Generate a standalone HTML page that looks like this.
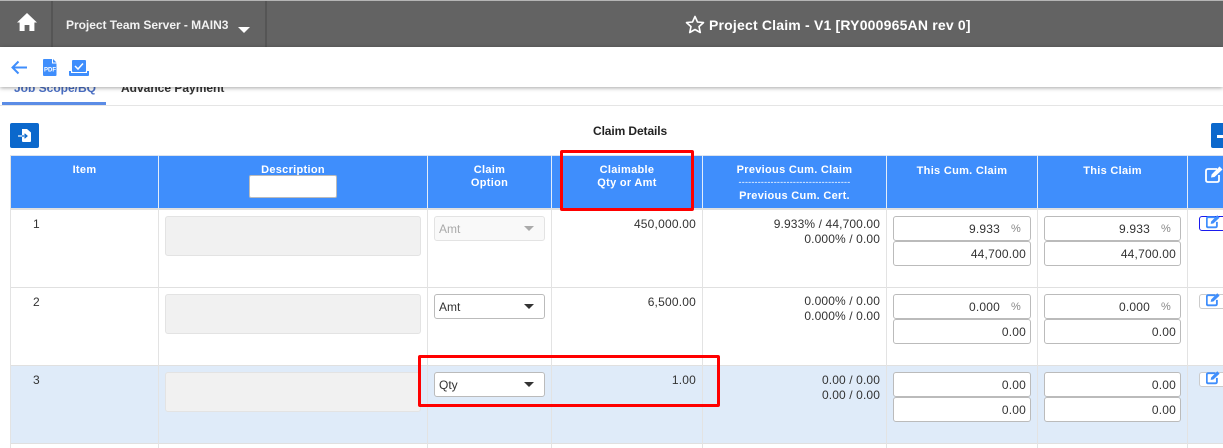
<!DOCTYPE html>
<html><head><meta charset="utf-8"><style>
html,body{margin:0;padding:0;background:#fff}
#p{position:relative;width:1223px;height:448px;overflow:hidden;background:#fff;font-family:"Liberation Sans",sans-serif;font-size:12px;color:#333}
#p div{position:absolute;box-sizing:border-box;white-space:nowrap}
#p svg{position:absolute}
.h{color:#fff;font-weight:bold;font-size:11px;text-align:center;letter-spacing:.3px;line-height:13px}
.vl{width:2px;background:#e3e3e3;top:155px;height:293px}
.vw{width:1px;background:#e3edfa;top:155px;height:53px}
.hl{left:10px;width:1213px;height:1px;background:#e0e0e0}
.d{background:#f1f1f1;border:1px solid #e3e3e3;border-radius:3px;left:165px;width:256px;height:40px}
.s{left:434px;width:111px;height:25px;background:#fff;border:1px solid #bbb;border-radius:3px;font-size:12px;line-height:25px;padding-left:4px}
.tr{position:absolute;left:89px;top:9px;width:0;height:0;border-left:5px solid transparent;border-right:5px solid transparent;border-top:5px solid #333}
.n{font-size:12px;text-align:right;line-height:16px;color:#333;letter-spacing:.2px}
.i{width:138px;height:25px;background:#fff;border:1px solid #bbb;border-radius:3px;text-align:right;font-size:12px;line-height:24px;padding-right:4px;letter-spacing:.2px}
.pc{padding-right:30px}
.pc span{position:absolute;right:9px;top:0;color:#888;font-size:11px}
.e{left:1199px;width:40px;height:15px;background:#fff;border:1px solid #ccc;border-radius:3px}
.e svg{left:6px;top:-3px}
</style></head><body><div id="p">

<div style="left:0;top:0;width:1223px;height:47px;background:#636363"></div>
<div style="left:0;top:0;width:1223px;height:1px;background:#b5b5b5"></div>
<div style="left:51px;top:1px;width:2px;height:46px;background:#555"></div>
<div style="left:265px;top:1px;width:2px;height:46px;background:#555"></div>
<svg style="left:16px;top:12px" width="22" height="20" viewBox="0 0 22 20"><path d="M11 1 L1 10.5 L3.6 10.5 L3.6 19 L8.6 19 L8.6 13 L13.4 13 L13.4 19 L18.4 19 L18.4 10.5 L21 10.5 Z" fill="#fff"/></svg>
<div style="left:66px;top:17px;color:#f2f2f2;font-size:12px;font-weight:bold;letter-spacing:-.03px;line-height:16px">Project Team Server - MAIN3</div>
<div style="left:238px;top:27px;width:0;height:0;border-left:6px solid transparent;border-right:6px solid transparent;border-top:6px solid #fff"></div>
<svg style="left:685px;top:15px" width="20" height="19" viewBox="0 0 20 19"><path d="M10 1.5 L12.5 7 L18.5 7.6 L14 11.6 L15.3 17.5 L10 14.5 L4.7 17.5 L6 11.6 L1.5 7.6 L7.5 7 Z" fill="none" stroke="#fff" stroke-width="1.6" stroke-linejoin="round"/></svg>
<div style="left:709px;top:17px;color:#fff;font-size:14px;font-weight:bold;line-height:17px;letter-spacing:.19px">Project Claim - V1 [RY000965AN rev 0]</div>

<div style="left:14px;top:80px;color:#4a6fc4;font-size:12px;font-weight:bold;line-height:16px">Job Scope/BQ</div>
<div style="left:121px;top:80px;color:#333;font-size:12px;font-weight:bold;line-height:16px">Advance Payment</div>
<div style="left:2px;top:102px;width:104px;height:3px;background:#5b8ce6"></div>
<div style="left:0;top:105px;width:1223px;height:1px;background:#e5e5e5"></div>

<div style="left:0;top:47px;width:1223px;height:40px;background:#fff;box-shadow:0 1px 4px rgba(0,0,0,.35)"></div>
<svg style="left:11px;top:60px" width="17" height="15" viewBox="0 0 17 15"><path d="M16 7.5 H2 M7.5 1.5 L1.5 7.5 L7.5 13.5" fill="none" stroke="#3f8efc" stroke-width="2"/></svg>
<svg style="left:43px;top:59px" width="14" height="17" viewBox="0 0 14 17"><path d="M1 0 H9 L9 4.5 L13.5 4.5 V16 Q13.5 17 12.5 17 H1 Q0 17 0 16 V1 Q0 0 1 0 Z M10 0 L13.5 3.5 H10 Z" fill="#3f8efc"/><text x="1" y="12.5" font-family="Liberation Sans" font-size="6" font-weight="bold" fill="#fff">PDF</text></svg>
<svg style="left:69px;top:60px" width="20" height="16" viewBox="0 0 20 16"><rect x="3" y="0" width="14" height="12" rx="1" fill="#3f8efc"/><path d="M0 11 H2 V13 H18 V11 H20 V15 Q20 16 19 16 H1 Q0 16 0 15 Z" fill="#3f8efc"/><path d="M6 6 L9 9 L14 3.5" fill="none" stroke="#fff" stroke-width="1.5"/></svg>

<div style="left:10px;top:123px;width:29px;height:25px;background:#0b68cc;border-radius:2px"></div>
<svg style="left:17px;top:127px" width="15" height="17" viewBox="0 0 15 17"><path d="M5 2 H10 L14 5.5 V14 Q14 15 13 15 H6 Q5 15 5 14 Z" fill="#fff"/><path d="M1 9 H10 M7.5 6.8 L10 9 L7.5 11.2" fill="none" stroke="#0b68cc" stroke-width="1.2"/><path d="M1 9 H5" stroke="#fff" stroke-width="1.2"/></svg>
<div style="left:593px;top:124px;font-size:12px;font-weight:bold;color:#222;line-height:14px;letter-spacing:-.1px">Claim Details</div>
<div style="left:1211px;top:123px;width:14px;height:25px;background:#0b68cc;border-radius:2px 0 0 2px"></div>
<svg style="left:1217px;top:131px" width="6" height="10" viewBox="0 0 6 10"><path d="M0 4 H6 V7 H0 Z" fill="#fff"/></svg>

<div style="left:10px;top:155px;width:1213px;height:1px;background:#dbe3ee"></div>
<div style="left:11px;top:156px;width:1212px;height:52px;background:#3f8efc"></div>
<div style="left:0;top:366px;width:1223px;height:77px;background:#fff"></div>
<div style="left:11px;top:366px;width:1212px;height:77px;background:#dfebf9"></div>

<div class="hl" style="top:208px;height:2px"></div>
<div class="hl" style="top:287px"></div>
<div class="hl" style="top:365px"></div>
<div class="hl" style="top:443px"></div>

<div class="vl" style="left:10px;width:1px"></div>
<div class="vl" style="left:158px;width:1px;"></div>
<div class="vl" style="left:427px;width:1px"></div>
<div class="vl" style="left:551px;width:1px"></div>
<div class="vl" style="left:702px;width:1px"></div>
<div class="vl" style="left:886px;width:1px"></div>
<div class="vl" style="left:1037px;width:1px"></div>
<div class="vl" style="left:1187px;width:1px"></div>
<div class="vw" style="left:158px"></div>
<div class="vw" style="left:427px"></div>
<div class="vw" style="left:551px"></div>
<div class="vw" style="left:702px"></div>
<div class="vw" style="left:886px"></div>
<div class="vw" style="left:1037px"></div>
<div class="vw" style="left:1187px"></div>

<div class="h" style="left:11px;width:147px;top:164px">Item</div>
<div class="h" style="left:159px;width:268px;top:164px">Description</div>
<div style="left:249px;top:175px;width:88px;height:23px;background:#fff;border:1px solid #bbb;border-radius:2px"></div>
<div class="h" style="left:428px;width:123px;top:164px">Claim<br>Option</div>
<div class="h" style="left:552px;width:150px;top:164px">Claimable<br>Qty or Amt</div>
<div class="h" style="left:703px;width:183px;top:164px">Previous Cum. Claim</div>
<div class="h" style="left:703px;width:183px;top:177px;letter-spacing:.2px;font-weight:normal;font-size:9px;height:10px;line-height:10px;overflow:hidden">-----------------------------------</div>
<div class="h" style="left:703px;width:183px;top:190px;">Previous Cum. Cert.</div>
<div class="h" style="left:887px;width:150px;top:165px">This Cum. Claim</div>
<div class="h" style="left:1038px;width:149px;top:165px">This Claim</div>
<svg style="left:1205px;top:165px" width="18" height="19" viewBox="0 0 18 19"><path d="M12 4 H3 Q1 4 1 6 V15 Q1 17 3 17 H12 Q14 17 14 15 V10" fill="none" stroke="#fff" stroke-width="1.8"/><path d="M6 12.5 L6.6 9.5 L14.5 1.5 L17.5 4.5 L9.5 12 Z" fill="#fff"/></svg>

<div class="n" style="left:33px;top:216px">1</div>
<div class="n" style="left:33px;top:294px">2</div>
<div class="n" style="left:33px;top:372px">3</div>

<div class="d" style="top:216px"></div>
<div class="d" style="top:294px"></div>
<div class="d" style="top:372px"></div>

<div class="s" style="top:216px;background:#f9f9f9;border-color:#e3e3e3;color:#aaa">Amt<div class="tr" style="border-top-color:#aaa"></div></div>
<div class="s" style="top:294px">Amt<div class="tr"></div></div>
<div class="s" style="top:372px">Qty<div class="tr"></div></div>

<div class="n" style="left:552px;width:144px;top:216px">450,000.00</div>
<div class="n" style="left:552px;width:144px;top:294px">6,500.00</div>
<div class="n" style="left:552px;width:144px;top:372px">1.00</div>

<div class="n" style="left:703px;width:177px;top:217px;line-height:15px;letter-spacing:.12px">9.933% / 44,700.00<br>0.000% / 0.00</div>
<div class="n" style="left:703px;width:177px;top:294px;line-height:15px;letter-spacing:.12px">0.000% / 0.00<br>0.000% / 0.00</div>
<div class="n" style="left:703px;width:177px;top:373px;line-height:15px;letter-spacing:.12px">0.00 / 0.00<br>0.00 / 0.00</div>

<div class="i pc" style="left:893px;top:216px">9.933<span>%</span></div>
<div class="i" style="left:893px;top:241px">44,700.00</div>
<div class="i pc" style="left:1044px;top:216px;width:137px">9.933<span>%</span></div>
<div class="i" style="left:1044px;top:241px;width:137px">44,700.00</div>
<div class="i pc" style="left:893px;top:294px">0.000<span>%</span></div>
<div class="i" style="left:893px;top:319px">0.00</div>
<div class="i pc" style="left:1044px;top:294px;width:137px">0.000<span>%</span></div>
<div class="i" style="left:1044px;top:319px;width:137px">0.00</div>
<div class="i" style="left:893px;top:372px">0.00</div>
<div class="i" style="left:893px;top:397px">0.00</div>
<div class="i" style="left:1044px;top:372px;width:137px">0.00</div>
<div class="i" style="left:1044px;top:397px;width:137px">0.00</div>

<div class="e" style="top:216px;border-color:#1a1aee"><svg width="14" height="15" viewBox="0 0 18 19"><path d="M12 4 H3 Q1 4 1 6 V15 Q1 17 3 17 H12 Q14 17 14 15 V10" fill="none" stroke="#3f8efc" stroke-width="2.4"/><path d="M6 12.5 L6.6 9.5 L14.5 1.5 L17.5 4.5 L9.5 12 Z" fill="#3f8efc"/></svg></div>
<div class="e" style="top:294px"><svg width="14" height="15" viewBox="0 0 18 19"><path d="M12 4 H3 Q1 4 1 6 V15 Q1 17 3 17 H12 Q14 17 14 15 V10" fill="none" stroke="#3f8efc" stroke-width="2.4"/><path d="M6 12.5 L6.6 9.5 L14.5 1.5 L17.5 4.5 L9.5 12 Z" fill="#3f8efc"/></svg></div>
<div class="e" style="top:372px"><svg width="14" height="15" viewBox="0 0 18 19"><path d="M12 4 H3 Q1 4 1 6 V15 Q1 17 3 17 H12 Q14 17 14 15 V10" fill="none" stroke="#3f8efc" stroke-width="2.4"/><path d="M6 12.5 L6.6 9.5 L14.5 1.5 L17.5 4.5 L9.5 12 Z" fill="#3f8efc"/></svg></div>

<div style="left:560px;top:150px;width:134px;height:61px;border:3px solid #f00;border-radius:2px"></div>
<div style="left:418px;top:355px;width:302px;height:52px;border:3px solid #f00;border-radius:2px"></div>

</div></body></html>
